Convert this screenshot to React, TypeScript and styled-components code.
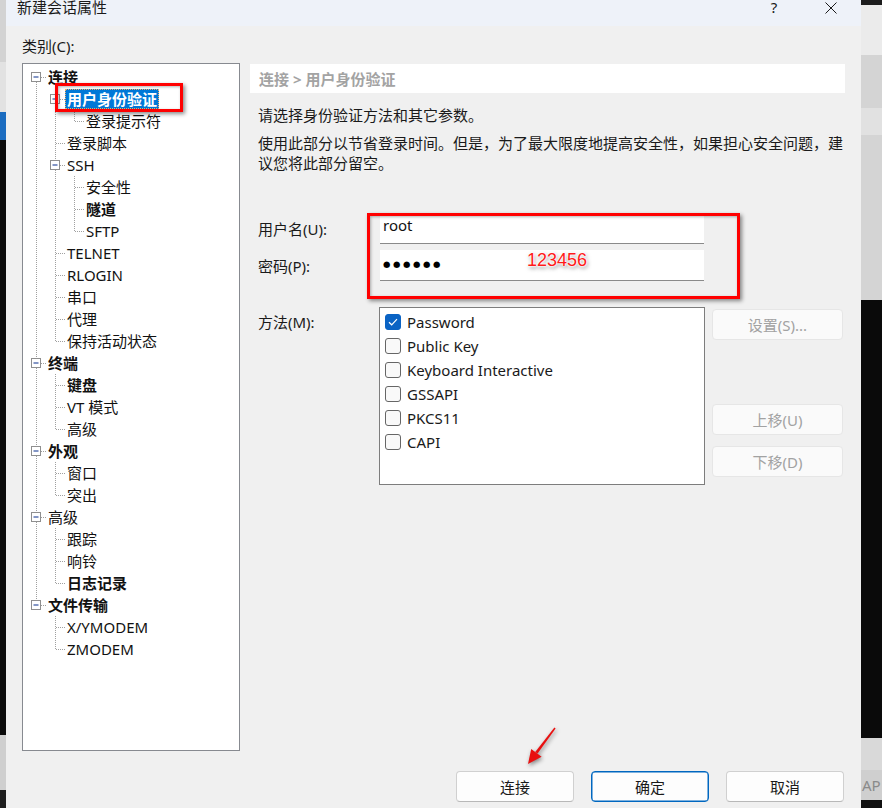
import React from 'react';
import styled, { createGlobalStyle } from 'styled-components';

const GlobalStyle = createGlobalStyle`
  html, body { margin: 0; padding: 0; width: 882px; height: 808px; overflow: hidden; background: #f0f0f0; }
  body { font-family: "Noto Sans", "Noto Sans CJK SC", sans-serif; font-size: 15px; color: #1a1a1a; }
  * { box-sizing: border-box; }
`;

const Screen = styled.div`
  position: relative;
  display: flex;
  width: 882px;
  height: 808px;
  overflow: hidden;
`;

const SideStrip = styled.div<{ $w: number }>`
  width: ${(p) => p.$w}px;
  flex: none;
  display: flex;
  flex-direction: column;
`;

const Band = styled.div<{ $h?: number; $c: string }>`
  ${(p) => (p.$h ? `height: ${p.$h}px; flex: none;` : 'flex: 1;')}
  background: ${(p) => p.$c};
  overflow: hidden;
  display: flex;
  align-items: center;
  color: #8a8a8a;
  font-size: 15px;
  padding-left: 1px;
`;

const Dialog = styled.div`
  width: 855px;
  flex: none;
  display: flex;
  flex-direction: column;
  background: #f0f0f0;
`;

const TitleBar = styled.div`
  height: 26px;
  flex: none;
  background: #eef2f9;
  display: flex;
  align-items: flex-start;
  padding: 0 7px 0 11px;
`;

const TitleText = styled.div`
  line-height: 14px;
  font-size: 15px;
  color: #1a1a1a;
`;

const TitleButtons = styled.div`
  margin-left: auto;
  display: flex;
  gap: 11px;
`;

const TitleButton = styled.div`
  width: 46px;
  height: 15px;
  display: flex;
  align-items: center;
  justify-content: center;
  font-size: 15px;
  line-height: 15px;
  color: #1a1a1a;
`;

const Body = styled.div`
  padding: 11px 16px 0;
  display: flex;
  flex-direction: column;
`;

const CategoryLabel = styled.div`
  line-height: 18px;
  margin-bottom: 8px;
`;

const Main = styled.div`
  display: flex;
  gap: 10px;
`;

const TreeBox = styled.div`
  width: 218px;
  height: 688px;
  flex: none;
  background: #fff;
  border: 1px solid #878a90;
  padding: 2px 0 0 4px;
  display: flex;
  flex-direction: column;
`;

const TreeRow = styled.div`
  height: 22px;
  display: flex;
  align-items: center;
`;

const GutterSvg = styled.svg`
  flex: none;
  display: block;
`;

const TreeLabel = styled.span<{ $bold?: boolean; $selected?: boolean }>`
  height: 20px;
  line-height: 20px;
  padding: 0 2px;
  white-space: nowrap;
  font-size: 15px;
  font-weight: ${(p) => (p.$bold ? 700 : 400)};
  color: ${(p) => (p.$selected ? '#fff' : '#111')};
  background: ${(p) => (p.$selected ? '#0078d7' : 'transparent')};
  outline: ${(p) => (p.$selected ? '1px dotted #f3b26a' : 'none')};
  outline-offset: -1px;
`;

const RightCol = styled.div`
  flex: 1;
  min-width: 0;
  margin-top: 1px;
  display: flex;
  flex-direction: column;
`;

const Breadcrumb = styled.div`
  height: 29px;
  background: #fff;
  padding-left: 9px;
  display: flex;
  align-items: center;
  color: #a3a3a3;
  font-weight: 700;
  font-size: 15px;
`;

const Intro = styled.div`
  margin-top: 12px;
  padding-left: 8px;
  line-height: 20px;
`;

const Paragraph = styled.div`
  margin-top: 8px;
  padding-left: 8px;
  line-height: 20px;
  white-space: nowrap;
`;

const FormGrid = styled.div`
  margin-top: 41px;
  padding-left: 8px;
  display: grid;
  grid-template-columns: 122px 324px;
  row-gap: 6px;
  align-items: center;
`;

const FieldLabel = styled.div`
  line-height: 20px;
`;

const Field = styled.div<{ $h: number }>`
  height: ${(p) => p.$h}px;
  background: #fff;
  border-bottom: 1px solid #8a8a8a;
  padding: 1px 3px 0;
  line-height: 20px;
  font-size: 15px;
  color: #111;
`;

const Dots = styled.span`
  display: inline-block;
  margin-top: 3px;
  font-family: "DejaVu Sans", sans-serif;
  font-size: 8.5px;
  letter-spacing: 2.6px;
  line-height: 20px;
  color: #000;
`;

const MethodsRow = styled.div`
  margin-top: 26px;
  padding-left: 8px;
  display: flex;
  align-items: flex-start;
`;

const MethodsLabel = styled.div`
  width: 121px;
  flex: none;
  padding-top: 5px;
  line-height: 20px;
`;

const MethodList = styled.div`
  width: 326px;
  height: 178px;
  flex: none;
  background: #fff;
  border: 1px solid #7d7d7d;
  padding-top: 2px;
  display: flex;
  flex-direction: column;
`;

const MethodItem = styled.div`
  height: 24px;
  display: flex;
  align-items: center;
  gap: 6px;
  padding-left: 5px;
  font-size: 15px;
  color: #1a1a1a;
`;

const CheckBox = styled.span<{ $on?: boolean }>`
  width: 16px;
  height: 16px;
  flex: none;
  border-radius: 3px;
  border: 1px solid ${(p) => (p.$on ? '#0a63c4' : '#666')};
  background: ${(p) => (p.$on ? '#0a63c4' : '#f9f9f9')};
  display: flex;
  align-items: center;
  justify-content: center;
`;

const SideButtons = styled.div`
  margin-left: 7px;
  width: 131px;
  flex: none;
  display: flex;
  flex-direction: column;
`;

const DisabledButton = styled.div<{ $mt: number }>`
  margin-top: ${(p) => p.$mt}px;
  height: 31px;
  border: 1px solid #e6e6e6;
  border-radius: 4px;
  background: #fafafa;
  color: #a2a2a2;
  display: flex;
  align-items: center;
  justify-content: center;
  font-size: 15px;
`;

const Footer = styled.div`
  margin-top: 20px;
  margin-right: 1px;
  display: flex;
  justify-content: flex-end;
  gap: 17px;
`;

const FooterButton = styled.div<{ $primary?: boolean }>`
  width: 118px;
  height: 31px;
  border-radius: 4px;
  background: #fdfdfd;
  border: 1px solid ${(p) => (p.$primary ? '#0067c0' : '#d0d0d0')};
  border-bottom-color: ${(p) => (p.$primary ? '#0067c0' : '#b8b8b8')};
  box-shadow: ${(p) => (p.$primary ? 'inset 0 0 0 0.5px #0067c0' : 'none')};
  display: flex;
  align-items: center;
  justify-content: center;
  font-size: 15px;
  color: #1a1a1a;
`;

const RedFrame = styled.div<{ $l: number; $t: number; $w: number; $h: number }>`
  position: absolute;
  left: ${(p) => p.$l}px;
  top: ${(p) => p.$t}px;
  width: ${(p) => p.$w}px;
  height: ${(p) => p.$h}px;
  border: 3px solid #ff0000;
  box-shadow: 2px 2px 4px rgba(0, 0, 0, 0.45), inset 1px 1px 3px rgba(0, 0, 0, 0.3);
  pointer-events: none;
`;

const Annotation = styled.div`
  position: absolute;
  left: 527px;
  top: 250px;
  font-family: "Liberation Sans", Arial, sans-serif;
  font-size: 18px;
  line-height: 20px;
  color: #ff1a1a;
  text-shadow: 0 0 1px #fff, 0 0 2px #fff, 0 0 2px #fff, 0 0 3px #fff, 1px 2px 4px rgba(0, 0, 0, 0.55);
`;

const ArrowSvg = styled.svg`
  position: absolute;
  left: 518px;
  top: 720px;
  overflow: visible;
  filter: drop-shadow(1px 2px 2px rgba(0, 0, 0, 0.45));
`;

type Seg = 'first' | 'tee' | 'last' | 'pass' | 'none';
interface TreeNode {
  label: string;
  segs: Seg[];
  box?: boolean;
  bold?: boolean;
  selected?: boolean;
}

const TREE: TreeNode[] = [
  { label: '连接', segs: ['first'], box: true, bold: true },
  { label: '用户身份验证', segs: ['pass', 'tee'], box: true, bold: true, selected: true },
  { label: '登录提示符', segs: ['pass', 'pass', 'last'] },
  { label: '登录脚本', segs: ['pass', 'tee'] },
  { label: 'SSH', segs: ['pass', 'tee'], box: true },
  { label: '安全性', segs: ['pass', 'pass', 'tee'] },
  { label: '隧道', segs: ['pass', 'pass', 'tee'], bold: true },
  { label: 'SFTP', segs: ['pass', 'pass', 'last'] },
  { label: 'TELNET', segs: ['pass', 'tee'] },
  { label: 'RLOGIN', segs: ['pass', 'tee'] },
  { label: '串口', segs: ['pass', 'tee'] },
  { label: '代理', segs: ['pass', 'tee'] },
  { label: '保持活动状态', segs: ['pass', 'last'] },
  { label: '终端', segs: ['tee'], box: true, bold: true },
  { label: '键盘', segs: ['pass', 'tee'], bold: true },
  { label: 'VT 模式', segs: ['pass', 'tee'] },
  { label: '高级', segs: ['pass', 'last'] },
  { label: '外观', segs: ['tee'], box: true, bold: true },
  { label: '窗口', segs: ['pass', 'tee'] },
  { label: '突出', segs: ['pass', 'last'] },
  { label: '高级', segs: ['tee'], box: true },
  { label: '跟踪', segs: ['pass', 'tee'] },
  { label: '响铃', segs: ['pass', 'tee'] },
  { label: '日志记录', segs: ['pass', 'last'], bold: true },
  { label: '文件传输', segs: ['last'], box: true, bold: true },
  { label: 'X/YMODEM', segs: ['none', 'tee'] },
  { label: 'ZMODEM', segs: ['none', 'last'] },
];

const METHODS = [
  { label: 'Password', on: true },
  { label: 'Public Key' },
  { label: 'Keyboard Interactive' },
  { label: 'GSSAPI' },
  { label: 'PKCS11' },
  { label: 'CAPI' },
];

const LINE = '#a0a0a0';

const Gutter: React.FC<{ seg: Seg; box?: boolean }> = ({ seg, box }) => {
  const up = seg === 'tee' || seg === 'last' || seg === 'pass';
  const down = seg === 'first' || seg === 'tee' || seg === 'pass';
  const across = seg === 'first' || seg === 'tee' || seg === 'last';
  return (
    <GutterSvg width="19" height="22" viewBox="0 0 19 22">
      {up && <line x1="9.5" y1="0" x2="9.5" y2="11" stroke={LINE} strokeDasharray="1 1" />}
      {down && <line x1="9.5" y1="12" x2="9.5" y2="22" stroke={LINE} strokeDasharray="1 1" />}
      {across && <line x1="10" y1="11.5" x2="19" y2="11.5" stroke={LINE} strokeDasharray="1 1" />}
      {box && (
        <>
          <rect x="4.5" y="6.5" width="9" height="9" fill="#fff" stroke="#8f8f8f" />
          <line x1="6.5" y1="11" x2="11.5" y2="11" stroke="#2f4f9e" strokeWidth="1.2" />
        </>
      )}
    </GutterSvg>
  );
};

const App: React.FC = () => (
  <>
    <GlobalStyle />
    <Screen>
      <SideStrip $w={6}>
        <Band $h={62} $c="#d3d3d3" />
        <Band $h={50} $c="#e2e2e2" />
        <Band $h={28} $c="#1b6cc0" />
        <Band $h={595} $c="#0b0b0b" />
        <Band $h={55} $c="#cfcfcf" />
        <Band $c="#1e1e1e" />
      </SideStrip>

      <Dialog>
        <TitleBar>
          <TitleText>新建会话属性</TitleText>
          <TitleButtons>
            <TitleButton>?</TitleButton>
            <TitleButton>
              <svg width="12" height="12" viewBox="0 0 12 12">
                <path d="M0.5 0.5 L11.5 11.5 M11.5 0.5 L0.5 11.5" stroke="#1a1a1a" strokeWidth="1" fill="none" />
              </svg>
            </TitleButton>
          </TitleButtons>
        </TitleBar>

        <Body>
          <CategoryLabel>类别(C):</CategoryLabel>
          <Main>
            <TreeBox>
              {TREE.map((n, i) => (
                <TreeRow key={i}>
                  {n.segs.map((s, j) => (
                    <Gutter key={j} seg={s} box={n.box && j === n.segs.length - 1} />
                  ))}
                  <TreeLabel $bold={n.bold} $selected={n.selected}>
                    {n.label}
                  </TreeLabel>
                </TreeRow>
              ))}
            </TreeBox>

            <RightCol>
              <Breadcrumb>连接 &gt; 用户身份验证</Breadcrumb>
              <Intro>请选择身份验证方法和其它参数。</Intro>
              <Paragraph>
                使用此部分以节省登录时间。但是，为了最大限度地提高安全性，如果担心安全问题，建
                <br />
                议您将此部分留空。
              </Paragraph>

              <FormGrid>
                <FieldLabel>用户名(U):</FieldLabel>
                <Field $h={30}>root</Field>
                <FieldLabel>密码(P):</FieldLabel>
                <Field $h={31}>
                  <Dots>●●●●●●</Dots>
                </Field>
              </FormGrid>

              <MethodsRow>
                <MethodsLabel>方法(M):</MethodsLabel>
                <MethodList>
                  {METHODS.map((m) => (
                    <MethodItem key={m.label}>
                      <CheckBox $on={m.on}>
                        {m.on && (
                          <svg width="10" height="8" viewBox="0 0 10 8">
                            <path d="M1 4.2 L3.7 6.8 L9 1.2" stroke="#fff" strokeWidth="1.2" fill="none" />
                          </svg>
                        )}
                      </CheckBox>
                      {m.label}
                    </MethodItem>
                  ))}
                </MethodList>
                <SideButtons>
                  <DisabledButton $mt={2}>设置(S)...</DisabledButton>
                  <DisabledButton $mt={64}>上移(U)</DisabledButton>
                  <DisabledButton $mt={11}>下移(D)</DisabledButton>
                </SideButtons>
              </MethodsRow>
            </RightCol>
          </Main>

          <Footer>
            <FooterButton>连接</FooterButton>
            <FooterButton $primary>确定</FooterButton>
            <FooterButton>取消</FooterButton>
          </Footer>
        </Body>
      </Dialog>

      <SideStrip $w={21}>
        <Band $h={5} $c="#1c1c1c" />
        <Band $h={50} $c="#ebebeb" />
        <Band $h={53} $c="#d4d4d4" />
        <Band $h={27} $c="#e1e1e1" />
        <Band $h={165} $c="#d4d4d4" />
        <Band $h={438} $c="#0a0a0a" />
        <Band $h={32} $c="#d9d9d9" />
        <Band $h={30} $c="#cfcfcf">AP</Band>
        <Band $c="#111" />
      </SideStrip>

      <RedFrame $l={55} $t={83} $w={128} $h={29} />
      <RedFrame $l={367} $t={213} $w={373} $h={86} />
      <Annotation>123456</Annotation>
      <ArrowSvg width="44" height="50" viewBox="0 0 44 50">
        <path d="M37.6 8.4 L36.4 7.6 L17.2 32.0 L19.6 33.6 Z" fill="#e81010" />
        <path d="M10 44 L23.6 36.8 L13.2 29.0 Z" fill="#e81010" />
      </ArrowSvg>
    </Screen>
  </>
);

export default App;
